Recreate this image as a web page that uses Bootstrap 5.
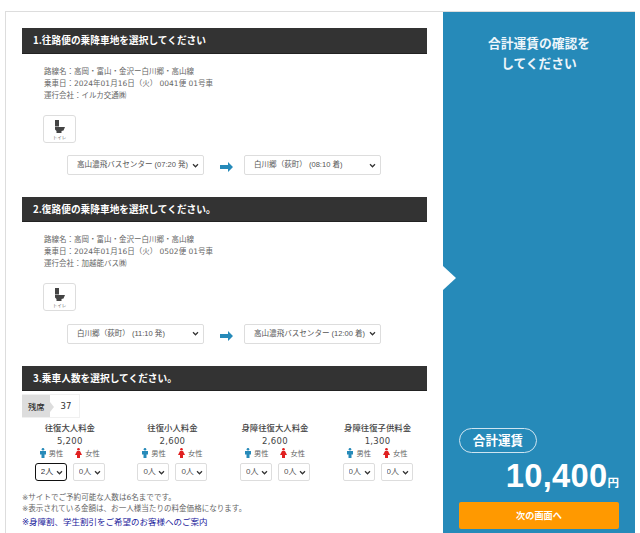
<!DOCTYPE html>
<html lang="ja"><head><meta charset="utf-8"><title>予約</title>
<link rel="stylesheet" href="https://cdn.jsdelivr.net/npm/bootstrap@5.3.0/dist/css/bootstrap.min.css">
<style>
html,body{height:533px;overflow:hidden;background:#fff}
body{font-family:"DejaVu Sans","Noto Sans CJK JP",sans-serif;color:#555;font-size:7.5px;line-height:12px}
.shell{margin:11px 5px 0;height:522px;border-top:1px solid #ddd;border-left:1px solid #ddd}
.leftpane{width:437px;padding:16px 16px 0 16px;flex:none}
.bar{background:#333;color:#fff;font-family:"Noto Sans CJK JP",sans-serif;font-weight:700;font-size:9.7px;height:25.5px;line-height:24px;padding-left:11px;border-bottom:1px solid #222}
.info{margin:12px 0 0 22px;color:#666}
.wc{width:33px;height:28px;border:1px solid #ddd;border-radius:3px;margin:13px 0 0 21px;background:#fff;text-align:center;font-family:"Noto Sans CJK JP",sans-serif;font-size:4.5px;line-height:5px;color:#666;padding-top:4px}
.wc svg{display:block;margin:0 auto 2px}
.route{margin:12.5px 0 0 45px}
.route svg{margin:4px 11px 0 16px}
.sel{appearance:none;-webkit-appearance:none;background:#fff url("data:image/svg+xml,%3Csvg xmlns='http://www.w3.org/2000/svg' viewBox='0 0 8 6'%3E%3Cpath d='M1 1.500l3 3 3-3' fill='none' stroke='%23333' stroke-width='1.500'/%3E%3C/svg%3E") no-repeat right 4px center/7px 5px;border:1px solid #ddd;border-radius:2px;color:#555;font-family:"Liberation Sans","Noto Sans CJK JP",sans-serif;font-size:7.55px;height:20px;padding:0 0 0 9px;outline:0}
.sel.wide{width:137px}
.sel.mini{width:32px;height:18px;padding-left:5px;background-position:right 3px center;font-size:8px}
.sel.on{border:1px solid #111;border-radius:3px;color:#333}
.sec2{margin-top:21.5px}
.sec3{margin-top:22px}
.seat{margin-top:3px;height:24px;width:58px;border:1px solid #f0f0f0;border-left:0;color:#333}
.seatlabel{width:28px;background:#ddd;line-height:23px;padding-left:6px;font-family:"Noto Sans CJK JP",sans-serif;font-weight:500;font-size:8.3px;position:relative}
.seatlabel::after{content:"";position:absolute;left:100%;top:7px;border-left:4px solid #ddd;border-top:5px solid transparent;border-bottom:5px solid transparent}
.seatnum{flex:1;text-align:center;font-size:8.5px;line-height:23px;padding-left:3px}
.fares{margin-top:2px;width:412px;margin-left:-3.500px}
.fare{width:102.6px;text-align:center}
.fname{font-family:"Noto Sans CJK JP",sans-serif;font-size:8.4px;line-height:14px;color:#444;font-weight:500}
.price{font-size:8.500px;line-height:14px;color:#444;letter-spacing:.3px}
.gender{gap:12px;line-height:11px;font-family:"Noto Sans CJK JP",sans-serif;font-size:7.300px;color:#666}
.gender svg{margin-right:3px;vertical-align:-2px}
.picks{gap:6px;margin-top:4px}
.notes{margin-top:11px;color:#666;line-height:11px;font-size:7.55px}
.notes .lnk{color:#22229b;line-height:16px;display:block;text-decoration:none;font-size:8.500px}
.sidepane{width:192px;flex:none;background:#268ab9;color:#fff;position:relative;padding:20.500px 16px 0}
.sidepane::before{content:"";position:absolute;left:0;top:254px;border-left:13px solid #fff;border-top:12px solid transparent;border-bottom:12px solid transparent}
.ask{font-family:"Noto Sans CJK JP",sans-serif;font-weight:700;font-size:12.750px;line-height:20px;text-align:center;color:#eef6fb}
.pill{width:78px;height:25px;border:1px solid #cfe5f1;border-radius:13px;font-family:"Noto Sans CJK JP",sans-serif;font-weight:700;font-size:12.600px;line-height:22px;text-align:center}
.sum{font-family:"Liberation Sans",sans-serif;font-weight:700;font-size:32.700px;line-height:38px;height:38px;overflow:hidden;text-align:right;margin-top:4px;letter-spacing:.3px}
.sum span{font-family:"Noto Sans CJK JP",sans-serif;font-size:11.500px;line-height:1;letter-spacing:0}
.nextbtn{display:block;width:160px;height:27px;margin-top:7px;background:#ff9900;border:0;border-radius:2px;color:#fff;font-family:"Noto Sans CJK JP",sans-serif;font-weight:700;font-size:9.200px;line-height:27px;padding:0;text-align:center}
</style></head>
<body>
<div class="shell d-flex">
 <main class="leftpane">
  <section>
   <div class="bar">1.往路便の乗降車地を選択してください</div>
   <div class="info">路線名：高岡・富山・金沢ー白川郷・高山線<br>乗車日：2024年01月16日（火） 0041便 01号車<br>運行会社：イルカ交通㈱</div>
   <div class="wc"><svg width="11" height="13" viewBox="0 0 11 13"><path fill="#444" d="M1 0h4v6.500H1zM1 7h10L9.500 10.500 7.500 11v2H2.500v-2L1 9.500z"/></svg>トイレ</div>
   <div class="route d-flex align-items-center">
    <select class="sel wide"><option>高山濃飛バスセンター (07:20 発)</option></select>
    <svg width="13" height="10" viewBox="0 0 13 10"><path fill="#268ab9" d="M0 3h8V0l5 5-5 5V7H0z"/></svg>
    <select class="sel wide"><option>白川郷（荻町） (08:10 着)</option></select>
   </div>
  </section>
  <section class="sec2">
   <div class="bar">2.復路便の乗降車地を選択してください。</div>
   <div class="info">路線名：高岡・富山・金沢ー白川郷・高山線<br>乗車日：2024年01月16日（火） 0502便 01号車<br>運行会社：加越能バス㈱</div>
   <div class="wc"><svg width="11" height="13" viewBox="0 0 11 13"><path fill="#444" d="M1 0h4v6.500H1zM1 7h10L9.500 10.500 7.500 11v2H2.500v-2L1 9.500z"/></svg>トイレ</div>
   <div class="route d-flex align-items-center">
    <select class="sel wide"><option>白川郷（荻町） (11:10 発)</option></select>
    <svg width="13" height="10" viewBox="0 0 13 10"><path fill="#268ab9" d="M0 3h8V0l5 5-5 5V7H0z"/></svg>
    <select class="sel wide"><option>高山濃飛バスセンター (12:00 着)</option></select>
   </div>
  </section>
  <section class="sec3">
   <div class="bar">3.乗車人数を選択してください。</div>
   <div class="seat d-flex"><div class="seatlabel">残席</div><div class="seatnum">37</div></div>
   <div class="fares d-flex">
    <div class="fare"><div class="fname">往復大人料金</div><div class="price">5,200</div>
     <div class="gender d-flex justify-content-center"><span><svg width="6" height="10" viewBox="0 0 6 10"><circle cx="3" cy="1.300" r="1.300" fill="#268ab9"/><path fill="#268ab9" d="M0 3h6v3.500H4.500V10h-3V6.500H0z"/></svg>男性</span><span><svg width="7" height="10" viewBox="0 0 7 10"><circle cx="3.500" cy="1.300" r="1.300" fill="#e02020"/><path fill="#e02020" d="M2 3h3l2 4H5v3H2V7H0z"/></svg>女性</span></div>
     <div class="picks d-flex justify-content-center"><select class="sel mini on"><option>2人</option></select><select class="sel mini"><option>0人</option></select></div></div>
    <div class="fare"><div class="fname">往復小人料金</div><div class="price">2,600</div>
     <div class="gender d-flex justify-content-center"><span><svg width="6" height="10" viewBox="0 0 6 10"><circle cx="3" cy="1.300" r="1.300" fill="#268ab9"/><path fill="#268ab9" d="M0 3h6v3.500H4.500V10h-3V6.500H0z"/></svg>男性</span><span><svg width="7" height="10" viewBox="0 0 7 10"><circle cx="3.500" cy="1.300" r="1.300" fill="#e02020"/><path fill="#e02020" d="M2 3h3l2 4H5v3H2V7H0z"/></svg>女性</span></div>
     <div class="picks d-flex justify-content-center"><select class="sel mini"><option>0人</option></select><select class="sel mini"><option>0人</option></select></div></div>
    <div class="fare"><div class="fname">身障往復大人料金</div><div class="price">2,600</div>
     <div class="gender d-flex justify-content-center"><span><svg width="6" height="10" viewBox="0 0 6 10"><circle cx="3" cy="1.300" r="1.300" fill="#268ab9"/><path fill="#268ab9" d="M0 3h6v3.500H4.500V10h-3V6.500H0z"/></svg>男性</span><span><svg width="7" height="10" viewBox="0 0 7 10"><circle cx="3.500" cy="1.300" r="1.300" fill="#e02020"/><path fill="#e02020" d="M2 3h3l2 4H5v3H2V7H0z"/></svg>女性</span></div>
     <div class="picks d-flex justify-content-center"><select class="sel mini"><option>0人</option></select><select class="sel mini"><option>0人</option></select></div></div>
    <div class="fare"><div class="fname">身障往復子供料金</div><div class="price">1,300</div>
     <div class="gender d-flex justify-content-center"><span><svg width="6" height="10" viewBox="0 0 6 10"><circle cx="3" cy="1.300" r="1.300" fill="#268ab9"/><path fill="#268ab9" d="M0 3h6v3.500H4.500V10h-3V6.500H0z"/></svg>男性</span><span><svg width="7" height="10" viewBox="0 0 7 10"><circle cx="3.500" cy="1.300" r="1.300" fill="#e02020"/><path fill="#e02020" d="M2 3h3l2 4H5v3H2V7H0z"/></svg>女性</span></div>
     <div class="picks d-flex justify-content-center"><select class="sel mini"><option>0人</option></select><select class="sel mini"><option>0人</option></select></div></div>
   </div>
   <div class="notes"><div>※サイトでご予約可能な人数は6名までです。</div><div>※表示されている金額は、お一人様当たりの料金価格になります。</div><a class="lnk" href="#">※身障割、学生割引をご希望のお客様へのご案内</a></div>
  </section>
 </main>
 <aside class="sidepane d-flex flex-column">
  <div class="ask">合計運賃の確認を<br>してください</div>
  <div class="mt-auto">
   <div class="pill">合計運賃</div>
   <div class="sum">10,400<span>円</span></div>
   <button class="nextbtn mb-1" type="button">次の画面へ</button>
  </div>
 </aside>
</div>
</body></html>
